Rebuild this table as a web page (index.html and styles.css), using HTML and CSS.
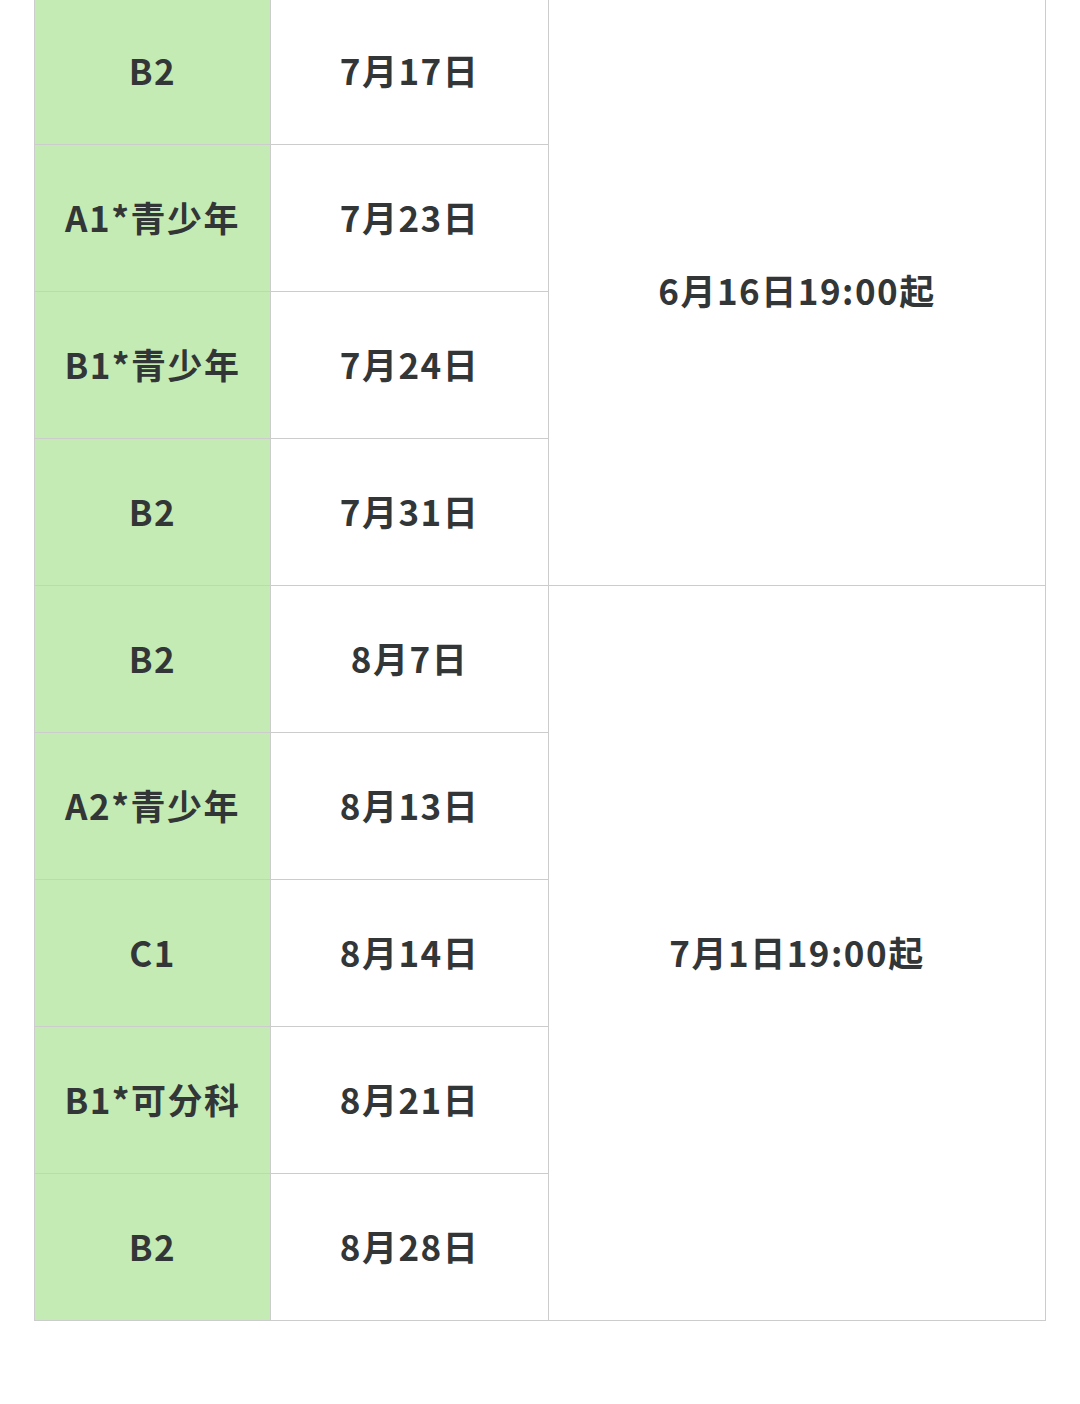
FILE: index.html
```html
<!DOCTYPE html>
<html lang="zh-CN">
<head>
<meta charset="utf-8">
<link rel="stylesheet" href="styles.css">
</head>
<body>
<div class="page">
<table class="sched">
  <colgroup>
    <col class="c-level">
    <col class="c-date">
    <col class="c-open">
  </colgroup>
  <tbody>
    <tr><td class="level">B2</td><td class="date">7月17日</td><td class="open" rowspan="4">6月16日19:00起</td></tr>
    <tr><td class="level">A1*青少年</td><td class="date">7月23日</td></tr>
    <tr><td class="level">B1*青少年</td><td class="date">7月24日</td></tr>
    <tr><td class="level">B2</td><td class="date">7月31日</td></tr>
    <tr><td class="level">B2</td><td class="date">8月7日</td><td class="open" rowspan="5">7月1日19:00起</td></tr>
    <tr><td class="level">A2*青少年</td><td class="date">8月13日</td></tr>
    <tr><td class="level">C1</td><td class="date">8月14日</td></tr>
    <tr><td class="level">B1*可分科</td><td class="date">8月21日</td></tr>
    <tr><td class="level">B2</td><td class="date">8月28日</td></tr>
  </tbody>
</table>
</div>
</body>
</html>
```
FILE: styles.css
```css
html, body {
  margin: 0;
  padding: 0;
  background: #ffffff;
}
.page {
  width: 1080px;
  height: 1404px;
  overflow: hidden;
  padding: 0 34px 0 34px;
  box-sizing: border-box;
}
.sched {
  margin-top: -3px;
  width: 1011px;
  table-layout: fixed;
  border-collapse: collapse;
  font-family: "Noto Sans CJK SC", "Noto Sans", sans-serif;
  font-weight: 700;
  font-size: 35px;
  color: #333637;
  letter-spacing: 1.5px;
}
.c-level { width: 236px; }
.c-date { width: 278px; }
.c-open { width: 497px; }
.sched td {
  border: 1px solid #cccccc;
  height: 142px;
  padding: 0 0 4px 0;
  text-align: center;
  vertical-align: middle;
  line-height: 1;
}
.sched td.level {
  background: #c5ebb5;
}
```
